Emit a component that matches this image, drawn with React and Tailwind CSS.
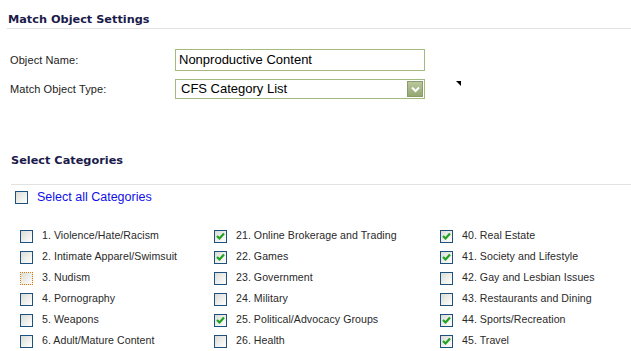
import React from "react";

const cols = [
  [
    ["1. Violence/Hate/Racism", false],
    ["2. Intimate Apparel/Swimsuit", false],
    ["3. Nudism", false, true],
    ["4. Pornography", false],
    ["5. Weapons", false],
    ["6. Adult/Mature Content", false],
  ],
  [
    ["21. Online Brokerage and Trading", true],
    ["22. Games", true],
    ["23. Government", false],
    ["24. Military", false],
    ["25. Political/Advocacy Groups", true],
    ["26. Health", false],
  ],
  [
    ["40. Real Estate", true],
    ["41. Society and Lifestyle", true],
    ["42. Gay and Lesbian Issues", false],
    ["43. Restaurants and Dining", false],
    ["44. Sports/Recreation", true],
    ["45. Travel", true],
  ],
];

function Box({ checked, focus }) {
  return (
    <span
      className={
        "relative inline-block w-[13px] h-[13px] shrink-0 bg-gradient-to-br from-[#dcdcd5] to-[#ffffff] " +
        (focus ? "border border-dotted border-[#d77a10]" : "border border-[#1c5180]")
      }
    >
      {checked && (
        <svg className="absolute left-[1px] top-[1px]" width="9" height="9" viewBox="0 0 9 9">
          <path d="M1 4 L3.5 6.5 L8 1.5" fill="none" stroke="#21a121" strokeWidth="2.2" />
        </svg>
      )}
    </span>
  );
}

export default function App() {
  const lbl = { fontFamily: '"Liberation Sans", Arial, sans-serif' };
  return (
    <div className="w-[631px] h-[351px] bg-white overflow-hidden text-[#222]" style={lbl}>
      <div
        className="ml-[7px] pt-[13px] pb-[1px] border-b border-[#e2e2e2] text-[11.3px] leading-[14px] font-bold text-[#1b1b4b]"
        style={{ fontFamily: '"DejaVu Sans", Verdana, sans-serif' }}
      >
        <span className="pl-[1px]">Match Object Settings</span>
      </div>

      <div className="mt-[20px] flex items-center">
        <div className="w-[175px] pl-[10px] text-[11px] tracking-[0.1px]">Object Name:</div>
        <div className="w-[250px] h-[22px] border border-[#a2ba7e] flex items-center pl-[3px] text-[13px] text-black">
          Nonproductive Content
        </div>
      </div>
      <div className="mt-[8px] flex items-center">
        <div className="w-[175px] pl-[10px] text-[11px] tracking-[0.1px]">Match Object Type:</div>
        <div className="w-[250px] h-[20px] border border-[#a2ba7e] flex items-center pl-[5px] pr-[1px] text-[13px] text-black">
          <span className="flex-1">CFS Category List</span>
          <span className="w-[16px] h-[16px] bg-gradient-to-b from-[#b9c79d] to-[#94a772] border border-[#8a9c6a] flex items-center justify-center">
            <svg width="9" height="7" viewBox="0 0 9 7">
              <path d="M1 1.5 L4.5 5 L8 1.5" fill="none" stroke="white" strokeWidth="2" />
            </svg>
          </span>
        </div>
        <svg className="ml-[31px] mt-[-12px]" width="5" height="5" viewBox="0 0 5 5">
          <path d="M0 0 L5 0 L5 5 Z" fill="#000" />
        </svg>
      </div>

      <div
        className="ml-[11px] mt-[55px] pb-[16px] border-b border-[#e2e2e2] text-[11.3px] leading-[14px] font-bold text-[#1b1b4b]"
        style={{ fontFamily: '"DejaVu Sans", Verdana, sans-serif' }}
      >
        Select Categories
      </div>

      <div className="mt-[3px] ml-[15px] flex items-center">
        <Box />
        <span className="ml-[9px] text-[12.5px] text-[#1010e8]">Select all Categories</span>
      </div>

      <div className="mt-[23px] ml-[20px] grid grid-cols-[194px_226px_1fr]">
        {cols.map((col, ci) => (
          <div key={ci} className="flex flex-col gap-[8px]">
            {col.map(([t, c, f]) => (
              <div key={t} className="flex items-center h-[13px]">
                <Box checked={c} focus={f} />
                <span className="ml-[9px] text-[10.6px] tracking-[0.05px] text-[#2a2a2a] whitespace-nowrap">{t}</span>
              </div>
            ))}
          </div>
        ))}
      </div>
    </div>
  );
}
